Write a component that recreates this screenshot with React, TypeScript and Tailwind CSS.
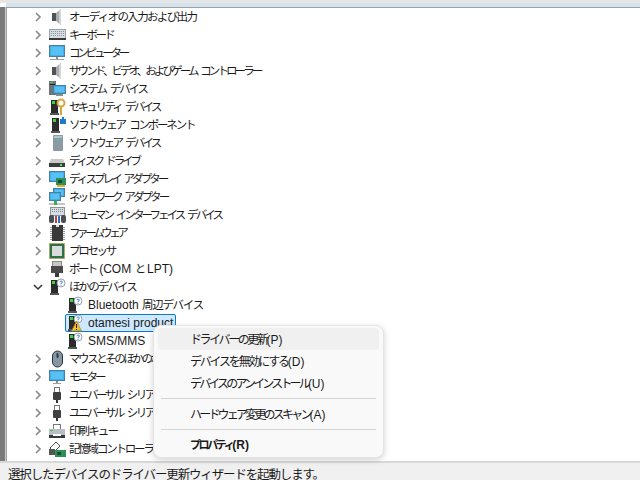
import React from 'react'

const jp = '[font-family:"Noto_Sans_CJK_JP","Noto_Sans_CJK_SC",sans-serif]'

// 小さいタワー (ほかのデバイス系で共通)
const Tower = ({ x = 4 }: { x?: number }) => (
  <g>
    <rect x={x} y={2} width={7} height={13} fill="#2b2b2b" />
    <rect x={x + 1} y={3} width={3} height={3} fill="#3fd43f" />
    <rect x={x - 1} y={15} width={9} height={2} fill="#555" />
  </g>
)

const Question = ({ cx = 13, cy = 5 }: { cx?: number; cy?: number }) => (
  <g>
    <circle cx={cx} cy={cy} r={4} fill="#fff" stroke="#8a9aa8" strokeWidth={0.9} />
    <path d={`M${cx - 1.3} ${cy - 1.2}q1.3-1.6 2.6-.2q.4 1-1.3 1.8v.6`} fill="none" stroke="#2a7ac0" strokeWidth={0.9} />
    <rect x={cx - 0.5} y={cy + 1.8} width={1} height={1} fill="#2a7ac0" />
  </g>
)

const Screen = ({ x = 1, y = 2, w = 16, h = 11 }: { x?: number; y?: number; w?: number; h?: number }) => (
  <g>
    <rect x={x} y={y} width={w} height={h} fill="#2f9fe0" stroke="#4a7fa5" strokeWidth={1} />
    <rect x={x + 1} y={y + 1} width={w - 2} height={h - 2} fill="#58c1f3" />
  </g>
)

const Usb = () => (
  <g>
    <rect x={6.500} y={1.500} width={5} height={5} fill="#fff" stroke="#777" />
    <rect x={5} y={6} width={8} height={8} rx={1} fill="#3f3f3f" />
    <rect x={8} y={14} width={2} height={3} fill="#333" />
  </g>
)

const Speaker = () => (
  <g>
    <rect x={4} y={5} width={4} height={8} fill="#4f5357" />
    <path d="M8 5l5-4v16l-5-4z" fill="#a9acaf" />
    <path d="M11 2.500l2-1.500v16l-2-1.500z" fill="#d2d4d6" />
  </g>
)

const KEY_ICONS: Record<string, React.ReactNode> = {
  speaker: <Speaker />,
  keyboard: (
    <g>
      <rect x={1.500} y={3.500} width={16} height={10} fill="#d8dde2" stroke="#9aa3aa" />
      <path d="M3 5.500h13M3 7.500h13M3 9.500h13" stroke="#8b949c" strokeDasharray="1 1" />
      <rect x={1} y={12} width={17} height={2} fill="#3a3a3a" />
    </g>
  ),
  monitor: (
    <g>
      <Screen x={1.500} y={1.500} w={15} h={11} />
      <rect x={8} y={13} width={2} height={2} fill="#8c8c8c" />
      <rect x={2} y={15} width={14} height={1} fill="#a0a0a0" />
    </g>
  ),
  system: (
    <g>
      <rect x={1} y={1} width={7} height={14} fill="#6f7478" />
      <rect x={2} y={2} width={3} height={1} fill="#3fd43f" />
      <rect x={2} y={4} width={5} height={1} fill="#222" />
      <Screen x={5.500} y={5.500} w={12} h={8} />
      <rect x={8} y={14} width={7} height={2} fill="#8c8c8c" />
    </g>
  ),
  security: (
    <g>
      <Tower x={3} />
      <circle cx={13} cy={5} r={3.500} fill="none" stroke="#d6a63c" strokeWidth={2} />
      <path d="M12 8h2v9h-2z" fill="#d6a63c" />
    </g>
  ),
  softcomp: (
    <g>
      <Tower x={4} />
      <path d="M12 3h2V1h2v2h2v5h-6z" fill="#1f78c8" />
    </g>
  ),
  softdev: (
    <g>
      <rect x={5} y={1} width={10} height={16} rx={1} fill="#8e9aa3" />
      <rect x={6} y={2} width={8} height={2} fill="#b9c3ca" />
      <rect x={9} y={5} width={2} height={2} fill="#35c7d6" />
    </g>
  ),
  disk: (
    <g>
      <path d="M3 7h12l2 4H1z" fill="#c9c9c9" />
      <rect x={1} y={11} width={16} height={4} fill="#3c3c3c" />
      <rect x={12} y={12} width={2} height={2} fill="#4fe04f" />
    </g>
  ),
  display: (
    <g>
      <Screen x={1.500} y={1.500} w={15} h={10} />
      <rect x={8} y={8} width={10} height={7} fill="#2f8f5a" />
      <rect x={10} y={10} width={4} height={3} fill="#1b4a30" />
      <rect x={9} y={15} width={8} height={2} fill="#e0b030" />
    </g>
  ),
  network: (
    <g>
      <Screen x={5.500} y={0.500} w={11} h={8} />
      <Screen x={1.500} y={4.500} w={11} h={8} />
      <rect x={6} y={13} width={3} height={2} fill="#37b34a" />
      <rect x={1} y={15} width={16} height={2} fill="#c6c6c6" />
      <rect x={6} y={15} width={3} height={2} fill="#37b34a" />
    </g>
  ),
  hid: (
    <g>
      <rect x={2.500} y={1.500} width={14} height={8} fill="#d8dde2" stroke="#8b949c" />
      <path d="M4 3.500h11M4 5.500h11" stroke="#7c858c" strokeDasharray="1 1" />
      <rect x={1} y={9} width={5} height={8} rx={2} fill="#4a4f55" />
      <rect x={13} y={9} width={5} height={8} rx={2} fill="#4a4f55" />
      <rect x={7} y={10} width={2} height={7} fill="#c04040" />
      <rect x={10} y={10} width={2} height={7} fill="#3070c0" />
    </g>
  ),
  firmware: (
    <g>
      <rect x={4} y={1} width={11} height={16} fill="#3a3a3a" />
      <path d="M3 3v13M16 3v13" stroke="#9a9a9a" strokeWidth={2} strokeDasharray="1 1" />
      <rect x={8} y={1} width={3} height={2} fill="#ddd" />
    </g>
  ),
  cpu: (
    <g>
      <rect x={1.500} y={1.500} width={15} height={15} fill="#2f6f4a" stroke="#c09a30" strokeDasharray="1 1" />
      <rect x={4} y={4} width={10} height={10} fill="#d9dcd9" />
    </g>
  ),
  port: (
    <g>
      <rect x={4.500} y={1.500} width={9} height={5} fill="#c8c8c8" stroke="#888" />
      <rect x={3} y={6} width={12} height={7} fill="#4a4a4a" />
      <rect x={7} y={13} width={4} height={4} fill="#3a3a3a" />
    </g>
  ),
  other: (
    <g>
      <Tower x={3} />
      <Question cx={13} cy={5} />
    </g>
  ),
  unknown: (
    <g>
      <Tower x={2} />
      <Question cx={11} cy={5} />
    </g>
  ),
  warn: (
    <g>
      <Tower x={2} />
      <Question cx={11} cy={5} />
      <path d="M9.500 7l5 10h-10z" fill="#f3c02c" stroke="#a87a10" strokeWidth={0.7} />
      <rect x={9} y={10} width={1} height={4} fill="#222" />
      <rect x={9} y={15} width={1} height={1} fill="#222" />
    </g>
  ),
  mouse: (
    <g>
      <rect x={4.500} y={1} width={10} height={16} rx={5} fill="#8796a3" stroke="#26323c" />
      <rect x={8.500} y={3} width={2} height={5} rx={1} fill="#2c3a46" />
    </g>
  ),
  monitor2: (
    <g>
      <Screen x={1.500} y={2.500} w={15} h={10} />
      <rect x={8} y={13} width={2} height={2} fill="#8c8c8c" />
      <rect x={5} y={15} width={8} height={1} fill="#a0a0a0" />
    </g>
  ),
  usb: <Usb />,
  printer: (
    <g>
      <rect x={5.500} y={2.500} width={7} height={5} fill="#fff" stroke="#777" />
      <rect x={1} y={7} width={16} height={6} fill="#b9bec2" />
      <rect x={2} y={8} width={3} height={1} fill="#3fd43f" />
      <rect x={1} y={13} width={16} height={3} fill="#3a3a3a" />
      <rect x={5} y={12} width={8} height={2} fill="#fff" />
    </g>
  ),
  storage: (
    <g>
      <path d="M2 8l6-6 4 4-6 6z" fill="#fff" stroke="#555" />
      <rect x={1} y={9} width={6} height={6} fill="#555" />
      <rect x={7} y={10} width={11} height={7} fill="#2f8f5a" />
      <rect x={9} y={12} width={4} height={3} fill="#1b4a30" />
    </g>
  ),
}

const Icon = ({ name }: { name: string }) => (
  <svg viewBox="0 0 18 18" className="w-[18px] h-[18px] shrink-0">
    {KEY_ICONS[name]}
  </svg>
)

const Chevron = ({ open }: { open?: boolean }) => (
  <svg viewBox="0 0 10 10" className="w-[10px] h-[10px] shrink-0">
    {open ? (
      <path d="M1 3l4 4 4-4" fill="none" stroke="#333" strokeWidth={1.5} />
    ) : (
      <path d="M3 1l4 4-4 4" fill="none" stroke="#8a8a8a" strokeWidth={1.7} />
    )}
  </svg>
)

type Row = { icon: string; label: React.ReactNode; track: string; open?: boolean }

const W4 = '[word-spacing:4px]'

const Lat = ({ children }: { children: React.ReactNode }) => (
  <span className="tracking-normal text-[12px] [font-family:'Liberation_Sans',sans-serif]">{children}</span>
)

const topRows: Row[] = [
  { icon: 'speaker', label: 'オーディオの入力および出力', track: 'tracking-[-1.65px]' },
  { icon: 'keyboard', label: 'キーボード', track: 'tracking-[-2.7px]' },
  { icon: 'monitor', label: 'コンピューター', track: 'tracking-[-3.2px]' },
  { icon: 'speaker', label: 'サウンド、ビデオ、およびゲーム コントローラー', track: `tracking-[-2.9px] ${W4}` },
  { icon: 'system', label: 'システム デバイス', track: `tracking-[-2.25px] ${W4}` },
  { icon: 'security', label: 'セキュリティ デバイス', track: `tracking-[-2.7px] ${W4}` },
  { icon: 'softcomp', label: 'ソフトウェア コンポーネント', track: `tracking-[-2.2px] ${W4}` },
  { icon: 'softdev', label: 'ソフトウェア デバイス', track: `tracking-[-2.8px] ${W4}` },
  { icon: 'disk', label: 'ディスク ドライブ', track: `tracking-[-3.1px] ${W4}` },
  { icon: 'display', label: 'ディスプレイ アダプター', track: `tracking-[-2.9px] ${W4}` },
  { icon: 'network', label: 'ネットワーク アダプター', track: `tracking-[-2.9px] ${W4}` },
  { icon: 'hid', label: 'ヒューマン インターフェイス デバイス', track: `tracking-[-2.9px] ${W4}` },
  { icon: 'firmware', label: 'ファームウェア', track: 'tracking-[-3.4px]' },
  { icon: 'cpu', label: 'プロセッサ', track: 'tracking-[-2.3px]' },
  { icon: 'port', label: <>ポート <Lat>(COM</Lat> と <Lat>LPT)</Lat></>, track: 'tracking-[-2.6px] [word-spacing:3.500px]' },
  { icon: 'other', label: 'ほかのデバイス', track: 'tracking-[-1.9px]', open: true },
]

const childRows: Row[] = [
  { icon: 'unknown', label: <><Lat>Bluetooth</Lat> 周辺デバイス</>, track: 'tracking-[-1.3px] [word-spacing:2px]' },
  { icon: 'warn', label: <Lat>otamesi product</Lat>, track: '' },
  { icon: 'unknown', label: <Lat>SMS/MMS</Lat>, track: '' },
]

const bottomRows: Row[] = [
  { icon: 'mouse', label: 'マウスとそのほかのポインティング デバイス', track: `tracking-[-2.4px] ${W4}` },
  { icon: 'monitor2', label: 'モニター', track: 'tracking-[-2.8px]' },
  { icon: 'usb', label: 'ユニバーサル シリアル バス コントローラー', track: `tracking-[-2.5px] ${W4}` },
  { icon: 'usb', label: 'ユニバーサル シリアル バス デバイス', track: `tracking-[-2.5px] ${W4}` },
  { icon: 'printer', label: '印刷キュー', track: 'tracking-[-1.9px]' },
  { icon: 'storage', label: '記憶域コントローラー', track: 'tracking-[-2.2px]' },
]

const TreeRow = ({ row }: { row: Row }) => (
  <div className="flex items-center h-[18px] pl-[26px] whitespace-nowrap">
    <Chevron open={row.open} />
    <div className="ml-[5px]">
      <Icon name={row.icon} />
    </div>
    <span className={`ml-[3px] text-[11.5px] text-[#1a1a1a] ${row.track}`}>{row.label}</span>
  </div>
)

const ChildRow = ({ row, selected }: { row: Row; selected?: boolean }) => (
  <div className="flex items-center h-[18px] pl-[58px] whitespace-nowrap">
    <div
      className={`flex items-center h-[18px] pl-[1px] pr-[2px] rounded-[2px] border ${
        selected ? 'border-[#0a78d4] bg-[#cde8ff]' : 'border-transparent'
      }`}
    >
      <Icon name={row.icon} />
      <span className={`ml-[3px] text-[11.5px] text-[#1a1a1a] ${row.track}`}>{row.label}</span>
    </div>
  </div>
)

const MenuItem = ({ label, hotkey, track, hot, bold }: { label: string; hotkey: string; track: string; hot?: boolean; bold?: boolean }) => (
  <div
    className={`flex items-center h-[22px] pl-[32px] rounded-[4px] text-[#1a1a1a] whitespace-nowrap ${
      hot ? 'bg-[#f0f0f0]' : ''
    } ${bold ? 'font-bold text-[11px]' : 'text-[12px]'}`}
  >
    <span className={track}>
      {label}
      <Lat>{hotkey}</Lat>
    </span>
  </div>
)

const Sep = () => <div className="h-px bg-[#d4d4d4] mx-[3px] my-[4px]" />

export default function App() {
  return (
    <div className={`relative w-[640px] h-[480px] overflow-hidden bg-white flex flex-col ${jp}`}>
      <div className="h-[3px] bg-[#e6e6e6] shrink-0" />
      <div className="h-[4px] bg-[#d3e3f0] shrink-0 ml-[6px]" />
      <div className="flex flex-1 min-h-0">
        <div className="w-[6px] bg-[#7a7a7a] border-r border-[#cfcfcf] shrink-0" />
        <div className="flex-1 border-t border-l border-[#a0a0a0]">
          {topRows.map((r, i) => (
            <TreeRow key={i} row={r} />
          ))}
          {childRows.map((r, i) => (
            <ChildRow key={i} row={r} selected={i === 1} />
          ))}
          {bottomRows.map((r, i) => (
            <TreeRow key={i} row={r} />
          ))}
        </div>
      </div>
      <div className="h-[19px] shrink-0 bg-[#f0f0f0] border-t-2 border-[#d8d8d8] pl-[8px] pt-[2px] text-[12.5px] leading-[18px] tracking-[-1.15px] text-[#1a1a1a] whitespace-nowrap">
        選択したデバイスのドライバー更新ウィザードを起動します。
      </div>

      <div className="absolute left-[153px] top-[325px] w-[231px] h-[133px] bg-[#f9f9f9] rounded-[8px] border border-[#e5e5e5] shadow-[0_2px_6px_rgba(0,0,0,0.18)] p-[2px] pl-[4px] pr-[4px]">
        <MenuItem label="ドライバーの更新" hotkey="(P)" track="tracking-[-2.4px]" hot />
        <MenuItem label="デバイスを無効にする" hotkey="(D)" track="tracking-[-2.2px]" />
        <MenuItem label="デバイスのアンインストール" hotkey="(U)" track="tracking-[-2.85px]" />
        <Sep />
        <MenuItem label="ハードウェア変更のスキャン" hotkey="(A)" track="tracking-[-2.8px]" />
        <Sep />
        <MenuItem label="プロパティ" hotkey="(R)" track="tracking-[-2.4px]" bold />
      </div>
    </div>
  )
}
